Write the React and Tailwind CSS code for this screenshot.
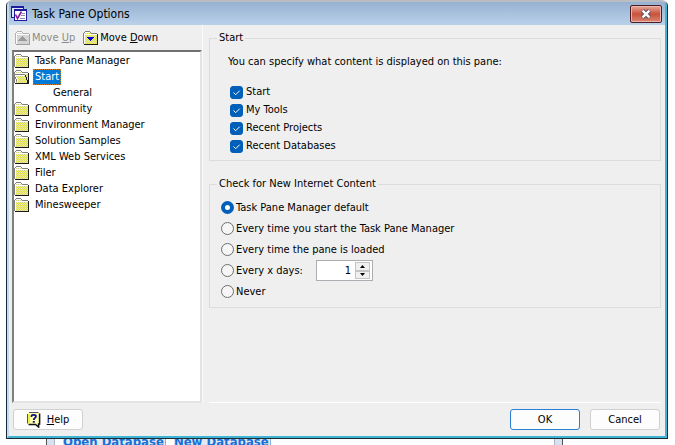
import React, { useState } from 'react';
import clsx from 'clsx';

const tree = [
  { label: 'Task Pane Manager' },
  { label: 'Start', open: true },
  { label: 'General', child: true },
  { label: 'Community' },
  { label: 'Environment Manager' },
  { label: 'Solution Samples' },
  { label: 'XML Web Services' },
  { label: 'Filer' },
  { label: 'Data Explorer' },
  { label: 'Minesweeper' },
];

const contentOptions = ['Start', 'My Tools', 'Recent Projects', 'Recent Databases'];

const scheduleOptions = [
  { value: 'default', label: 'Task Pane Manager default' },
  { value: 'start', label: 'Every time you start the Task Pane Manager' },
  { value: 'load', label: 'Every time the pane is loaded' },
  { value: 'days', label: 'Every x days:' },
  { value: 'never', label: 'Never' },
];

// Shared dither fill for all folder icons
function IconDefs() {
  return (
    <svg width="0" height="0" className="absolute" aria-hidden="true">
      <defs>
        <pattern id="dither" width="2" height="2" patternUnits="userSpaceOnUse">
          <rect width="2" height="2" fill="#f4f460" />
          <rect width="1" height="1" fill="#d6d68c" />
          <rect x="1" y="1" width="1" height="1" fill="#d6d68c" />
        </pattern>
      </defs>
    </svg>
  );
}

function Folder({ fill, edge, shadow }) {
  return (
    <>
      <path d="M1 2h1V1h5v1h1v1h6v10H1z" fill={fill} />
      <path d="M2 0h5v1H2zM1 1h1v1H1zM7 1h1v1H7zM8 2h6v1H8zM0 2h1v11H0z" fill={edge} />
      <path d="M2 1h5v1H2zM1 3h13v1H1zM1 2h1v11H1z" fill="#fff" />
      <path d="M14 3h1v11H1v-1h13z" fill={shadow} />
    </>
  );
}

function FolderIcon({ open }) {
  return (
    <svg width="16" height="14" viewBox="0 0 16 14" className="shrink-0" shapeRendering="crispEdges" aria-hidden="true">
      <Folder fill="url(#dither)" edge="#808080" shadow="#1a1a1a" />
      {open && (
        <>
          <path d="M0 5h11v2h1v3h1v3H3v-2H2V9H1V7H0z" fill="url(#dither)" />
          <path d="M0 4h11v1H0zM0 5h1v2H0zM1 7h1v2H1zM2 9h1v3H2z" fill="#808080" />
          <path d="M1 5h10v1H1zM1 6h1v1H1zM2 7h1v2H2zM3 9h1v3H3z" fill="#fff" />
          <path d="M11 5h1v2h1v3h1v3h-1v-3h-1V7h-1z" fill="#1a1a1a" />
        </>
      )}
    </svg>
  );
}

function MoveIcon({ up }) {
  return (
    <svg width="16" height="14" viewBox="0 0 16 14" className="shrink-0" shapeRendering="crispEdges" aria-hidden="true">
      {up ? (
        <>
          <Folder fill="#d4d4d4" edge="#b0b0b0" shadow="#a0a0a0" />
          <path d="M7 5h1v1h1v1h1v1h1v1h1v1H3V9h1V8h1V7h1V6h1z" fill="#9a9a9a" />
        </>
      ) : (
        <>
          <Folder fill="url(#dither)" edge="#808080" shadow="#1a1a1a" />
          <path d="M4 6h7v1h-1v1H9v1H8v1H7V9H6V8H5V7H4z" fill="#0000e0" />
        </>
      )}
    </svg>
  );
}

function AppIcon() {
  return (
    <svg width="16" height="15" viewBox="0 0 16 15" className="shrink-0" shapeRendering="crispEdges" aria-hidden="true">
      <path d="M0 0h13v12H0z" fill="#1c1c9c" />
      <path d="M1 2h11v9H1z" fill="#dfe6f5" />
      <path d="M3 3h13v12H3z" fill="#1c1c9c" />
      <path d="M4 5h11v9H4z" fill="#fff" />
      <path d="M11 7h3v1h-3zM10 9h4v1h-4zM9 12h5v1H9z" fill="#8a8ab0" />
      <path d="M4.500 8.500l2 4 4-7" stroke="#8b1a9b" strokeWidth="1.600" fill="none" shapeRendering="auto" />
    </svg>
  );
}

function HelpIcon() {
  return (
    <svg width="14" height="16" viewBox="0 0 14 16" className="shrink-0" aria-hidden="true">
      <path d="M2 .500h9l1.500 1.500v9L11.500 12v3L8.500 12H2L.500 11V2z" fill="#ffffb0" />
      <path d="M1 2h2v9H1z" fill="#f2f23c" />
      <path d="M2 .500h9.500M.500 2v9.500" stroke="#555" fill="none" />
      <path d="M12.600 1.500v10.500h-1v3L8.500 12.500H1.500" stroke="#111" strokeWidth="1.500" fill="none" />
      <path d="M4.500 5V4C4.500 3 5.300 2.800 6.700 2.800s2.300.4 2.300 1.500C9 6 6.700 6 6.700 8" stroke="#10108c" strokeWidth="1.700" fill="none" />
      <path d="M5.800 9h2v1.700h-2z" fill="#10108c" />
    </svg>
  );
}

function CloseIcon() {
  return (
    <svg width="12" height="10" viewBox="0 0 12 10" aria-hidden="true">
      <path d="M2.500 1.500l7 7M9.500 1.500l-7 7" stroke="#56545e" strokeWidth="4.400" />
      <path d="M2.600 1.600l6.800 6.800M9.400 1.600L2.600 8.400" stroke="#fff" strokeWidth="2.400" />
    </svg>
  );
}

function Checkbox({ label }) {
  const [checked, setChecked] = useState(true);
  return (
    <label className="flex h-[18px] items-center gap-[3px]">
      <span className="grid size-[13px] place-items-center">
        <input
          type="checkbox"
          checked={checked}
          onChange={(e) => setChecked(e.target.checked)}
          className="peer col-start-1 row-start-1 size-[13px] appearance-none rounded-[3px] border border-[#868686] bg-white checked:border-[#005fb8] checked:bg-[#005fb8]"
        />
        <svg viewBox="0 0 13 13" className="pointer-events-none invisible col-start-1 row-start-1 size-[13px] peer-checked:visible" aria-hidden="true">
          <path d="M3.500 6.500l2.200 2.200 4-4" stroke="#fff" fill="none" />
        </svg>
      </span>
      {label}
    </label>
  );
}

function Group({ title, children }) {
  return (
    <fieldset className="min-w-0 border border-[#dcdcdc] pb-[5px]">
      <legend className="ml-[7px] h-4 px-[2px] leading-4">{title}</legend>
      {children}
    </fieldset>
  );
}

export default function App() {
  const [selected, setSelected] = useState('Start');
  const [schedule, setSchedule] = useState('default');
  const [days, setDays] = useState(1);

  return (
    <div className='flex min-h-screen flex-col bg-white font-["DejaVu_Sans_Condensed","DejaVu_Sans",sans-serif] text-[11px] leading-4 text-black'>
      <IconDefs />
      <main className="ml-[6px] mr-[7px] flex flex-1 flex-col rounded-t-md border border-t-2 border-[#1c2b33] border-t-[#b9bcc0] bg-[#efefef]">
        <div className="flex flex-1 flex-col rounded-t border-x-2 border-b-2 border-l-[#c5daee] border-r-[#3fb4d4] border-b-[#3fb4d4]">
          <header className="flex h-[23px] items-center gap-[5px] bg-linear-to-b from-[#97b1d0] to-[#b9d1ea] pl-[2px] pr-[3px]">
            <AppIcon />
            <h1 className="flex-1 text-[12px]">Task Pane Options</h1>
            <button
              type="button"
              aria-label="Close"
              className="flex h-[18px] w-8 items-center justify-center rounded-[2px] border border-[#4d1b22] bg-linear-to-b from-[#e6a79b] via-[#c9503a] via-50% to-[#d98570] shadow-[inset_0_0_0_1px_#e8b5ab]"
            >
              <CloseIcon />
            </button>
          </header>

          <div className="flex flex-1">
            <div className="flex w-[193px] flex-col pl-[3px]">
              <div className="flex h-[25px] items-center gap-2 pl-[3px]">
                <button type="button" disabled className="flex items-center gap-px whitespace-nowrap text-[#8c8c8c]">
                  <MoveIcon up />
                  <span>Move <u>U</u>p</span>
                </button>
                <button type="button" className="flex items-center gap-px whitespace-nowrap">
                  <MoveIcon />
                  <span>Move <u>D</u>own</span>
                </button>
              </div>
              <ul className="flex-1 border-2 border-b-[#e3e3e3] border-l-[#808080] border-r-[#e3e3e3] border-t-[#707070] bg-white pt-px">
                {tree.map((node) => (
                  <li key={node.label} className={clsx('flex h-4 items-center gap-[3px]', node.child && 'pl-[37px]')}>
                    {!node.child && <FolderIcon open={node.open} />}
                    <button
                      type="button"
                      onClick={() => setSelected(node.label)}
                      className={clsx(
                        'h-4 whitespace-nowrap border border-dotted px-px leading-[14px]',
                        selected === node.label ? 'border-[#d07a20] bg-[#0078d7] text-white' : 'border-transparent'
                      )}
                    >
                      {node.label}
                    </button>
                  </li>
                ))}
              </ul>
            </div>

            <div className="flex min-w-0 flex-1 flex-col gap-[15px] border-l border-[#fafafa] pl-[6px] pr-[4px] pt-[5px]">
              <Group title="Start">
                <p className="pl-[18px] pt-[8px]">You can specify what content is displayed on this pane:</p>
                <div className="flex flex-col items-start pl-5 pt-[13px]">
                  {contentOptions.map((label) => (
                    <Checkbox key={label} label={label} />
                  ))}
                </div>
              </Group>

              <Group title="Check for New Internet Content">
                <div className="flex flex-col items-start pl-[11px] pt-[5px]">
                  {scheduleOptions.map((option) => (
                    <div key={option.value} className="flex h-[21px] items-center">
                      <label className="flex items-center gap-[2px]">
                        <input
                          type="radio"
                          name="schedule"
                          checked={schedule === option.value}
                          onChange={() => setSchedule(option.value)}
                          className="size-[13px] appearance-none rounded-full border border-[#6e6e6e] bg-[#f6f6f6] checked:border-4 checked:border-[#005fb8] checked:bg-white"
                        />
                        {option.label}
                      </label>
                      {option.value === 'days' && (
                        <div className="ml-[13px] flex h-[21px] w-[57px] border border-[#abadb3] bg-white">
                          <input
                            type="text"
                            aria-label="Days"
                            value={days}
                            onChange={(e) => setDays(Number(e.target.value) || 0)}
                            className="min-w-0 flex-1 pr-1 text-right outline-none"
                          />
                          <div className="my-px mr-[2px] flex w-[15px] flex-col">
                            <button type="button" aria-label="More days" onClick={() => setDays(days + 1)} className="flex flex-1 items-center justify-center border border-[#c4c4c4] bg-[#f0f0f0]">
                              <svg width="5" height="3" viewBox="0 0 5 3" aria-hidden="true"><path d="M0 3L2.500 0 5 3z" /></svg>
                            </button>
                            <button type="button" aria-label="Fewer days" onClick={() => setDays(Math.max(1, days - 1))} className="flex flex-1 items-center justify-center border border-[#c4c4c4] bg-[#f0f0f0]">
                              <svg width="5" height="3" viewBox="0 0 5 3" aria-hidden="true"><path d="M0 0L2.500 3 5 0z" /></svg>
                            </button>
                          </div>
                        </div>
                      )}
                    </div>
                  ))}
                </div>
              </Group>
              <hr className="mt-auto border-white" />
            </div>
          </div>

          <footer className="flex items-center gap-[10px] py-[6px] pl-1 pr-[5px]">
            <button type="button" className="mr-auto flex h-[21px] w-[70px] items-center justify-center gap-[6px] rounded-[3px] border border-[#d0d0d0] bg-[#fdfdfd]">
              <HelpIcon />
              <span><u>H</u>elp</span>
            </button>
            <button type="button" className="h-[21px] w-[70px] rounded-[3px] border border-[#2b7fd4] bg-[#fdfdfd]">OK</button>
            <button type="button" className="h-[21px] w-[70px] rounded-[3px] border border-[#d0d0d0] bg-[#fdfdfd]">Cancel</button>
          </footer>
        </div>
      </main>

      {/* Strip of the start page that shows below the dialog */}
      <div className="ml-[46px] mr-28 flex h-[6px] gap-2 overflow-hidden border-l border-r border-[#555] bg-white text-[13px] font-bold leading-[6px] text-[#1670d8]">
        <div className="w-2 shrink-0 border-r border-[#a9b8c8] bg-[#d6e2f0]" />
        <a href="#open" className="whitespace-nowrap border-r border-[#8ab0dc] bg-[#e4e8f0] pr-px">Open Database</a>
        <a href="#new" className="whitespace-nowrap border-r border-[#8ab0dc] bg-[#e4e8f0] pr-px">New Database</a>
        <div className="ml-auto w-2 shrink-0 border-l border-[#a9b8c8] bg-[#d6e2f0]" />
      </div>
    </div>
  );
}
